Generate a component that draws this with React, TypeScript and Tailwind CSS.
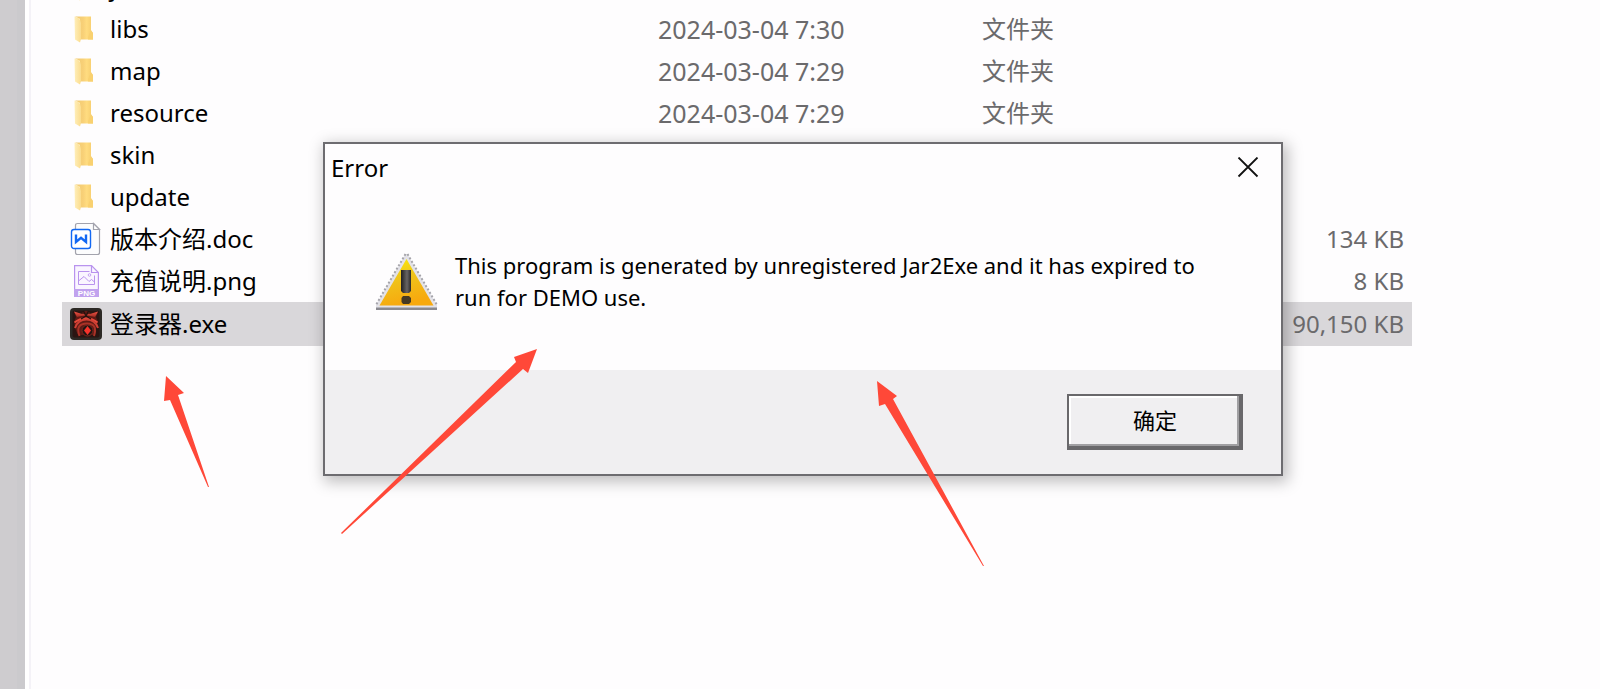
import type { ReactNode } from "react";

function FolderIcon() {
  return (
    <svg width="32" height="32" viewBox="0 0 32 32" aria-hidden="true">
      <defs>
        <linearGradient id="folderBack" x1="0" x2="1" y1="0" y2="0">
          <stop offset="0" stopColor="#f0ca72" />
          <stop offset="0.450" stopColor="#f8d077" />
          <stop offset="0.650" stopColor="#ffdc80" />
          <stop offset="1" stopColor="#f5cb6c" />
        </linearGradient>
        <linearGradient id="folderFront" x1="0" x2="1" y1="0" y2="0">
          <stop offset="0" stopColor="#ffeeb9" />
          <stop offset="1" stopColor="#fbdc8d" />
        </linearGradient>
      </defs>
      <path d="M5 3.500H21V17L23 20V26.500H10V6Z" fill="url(#folderBack)" />
      <path d="M20.500 18L23 20V26.500H18V24Z" fill="#f9d170" />
      <path d="M4.500 3.500L8.500 5Q11 7 11 10V26L10 29.500L5 26.500Z" fill="url(#folderFront)" />
    </svg>
  );
}

function DocIcon() {
  return (
    <svg width="32" height="34" viewBox="0 0 32 34" fill="none" aria-hidden="true">
      <path d="M7.500 1.500H23.500L29.500 7.500V30.500Q29.500 32.500 27.500 32.500H7.500Q5.500 32.500 5.500 30.500V3.500Q5.500 1.500 7.500 1.500Z" fill="#fcfcfd" stroke="#a3a3ad" strokeWidth="1.200" />
      <path d="M23.500 1.500V7.500H29.500Z" fill="#fff" stroke="#a3a3ad" strokeWidth="1.200" />
      <rect x="1.500" y="7.500" width="19" height="19" rx="2.500" fill="#fff" stroke="#1268f3" strokeWidth="1.400" />
      <path d="M6 12.500V20L11 15.800L16 20V12.500" stroke="#1268f3" strokeWidth="2.400" />
    </svg>
  );
}

function PngIcon() {
  return (
    <svg width="32" height="34" viewBox="0 0 32 34" fill="none" aria-hidden="true">
      <path d="M4.600 1.600H21.500L28.400 8.500V32H4.600Z" fill="#faf5ff" stroke="#b993ee" strokeWidth="1.200" />
      <path d="M21.500 1.600V8.500H28.400" stroke="#b993ee" strokeWidth="1.200" />
      <path d="M19.500 7.500H8.500V20.500H24.500V11.500" stroke="#b993ee" />
      <path d="M8.500 17L14 12.500L19 17.500L21.500 15.500L24.500 18" stroke="#b993ee" />
      <circle cx="19.500" cy="11" r="1.300" stroke="#b993ee" strokeWidth="0.800" />
      <rect x="4" y="25" width="25" height="8" fill="#c1a2ee" />
      <text x="16.500" y="32" textAnchor="middle" fontFamily="Liberation Sans, sans-serif" fontSize="8" fontWeight="700" fill="#fff">PNG</text>
    </svg>
  );
}

function ExeIcon() {
  return (
    <svg width="32" height="32" viewBox="0 0 32 32" fill="none" aria-hidden="true">
      <defs>
        <linearGradient id="crest" x1="0" x2="0" y1="0" y2="1">
          <stop offset="0" stopColor="#f45547" />
          <stop offset="1" stopColor="#9c2a20" />
        </linearGradient>
      </defs>
      <rect width="32" height="32" rx="4" fill="#2c2925" />
      <rect x="2.500" y="2.500" width="27" height="27" rx="2" fill="#2a1512" />
      <path d="M4 4L11 6L14 3H18L21 6L28 4L26 9L28 14L26 20L24 27H8L5 20L4 14L6 9Z" fill="#5f1a15" />
      <path d="M4 3.500L12 6H20L28 3.500L25 9Q16 6 7 9Z" fill="url(#crest)" />
      <path d="M4.500 14.500Q16 6 27.500 14.500" stroke="#e64a3c" strokeWidth="2" />
      <path d="M5 20Q8 11.500 16.500 11.500Q25 11.500 28 20" stroke="#cf4034" strokeWidth="2" />
      <path d="M9.500 28Q5 15.500 17 15.500Q28 15.500 24 28" stroke="#aa3227" strokeWidth="2" />
      <path d="M13.500 3L16 8L18.500 3M11 11L16 8L21 11" stroke="#25120f" strokeWidth="1.400" />
      <circle cx="17.500" cy="22.500" r="5.500" fill="#211412" stroke="#7a281f" />
      <path d="M17.500 18L21 22.500L17.500 27L14 22.500Z" fill="#f5332b" />
    </svg>
  );
}

function WarningIcon() {
  return (
    <svg width="64" height="58" viewBox="0 0 64 58" aria-hidden="true">
      <defs>
        <linearGradient id="warnFill" x1="0" x2="0.300" y1="0" y2="1">
          <stop offset="0" stopColor="#fff000" />
          <stop offset="0.450" stopColor="#efc51c" />
          <stop offset="1" stopColor="#f7a90e" />
        </linearGradient>
        <linearGradient id="warnMark" x1="0" x2="1" y1="0" y2="0">
          <stop offset="0" stopColor="#22201f" />
          <stop offset="0.600" stopColor="#686565" />
          <stop offset="1" stopColor="#2b2929" />
        </linearGradient>
      </defs>
      <path d="M30.500 1H32.500L62 52V56H1V52Z" fill="#e3e2e8" />
      <path d="M30.500 1L1 52M32.500 1L62 52" stroke="#a5a4aa" strokeWidth="2" strokeDasharray="2 2" />
      <path d="M1 54.500H62V57H1Z" fill="#8a898f" />
      <path d="M31.500 6L58.500 52.500H4.500Z" fill="url(#warnFill)" />
      <path d="M26 17H36V38L34 40H28L26 38Z" fill="url(#warnMark)" />
      <path d="M28 43H34L36 45V49L34 51H28L26.500 49V45Z" fill="#463a24" />
    </svg>
  );
}

type Entry = { name: string; icon: ReactNode; date?: string; type?: string; size?: string; selected?: boolean };

const entries: Entry[] = [
  { name: "jre", icon: <FolderIcon /> },
  { name: "libs", icon: <FolderIcon />, date: "2024-03-04 7:30", type: "文件夹" },
  { name: "map", icon: <FolderIcon />, date: "2024-03-04 7:29", type: "文件夹" },
  { name: "resource", icon: <FolderIcon />, date: "2024-03-04 7:29", type: "文件夹" },
  { name: "skin", icon: <FolderIcon /> },
  { name: "update", icon: <FolderIcon /> },
  { name: "版本介绍.doc", icon: <DocIcon />, size: "134 KB" },
  { name: "充值说明.png", icon: <PngIcon />, size: "8 KB" },
  { name: "登录器.exe", icon: <ExeIcon />, size: "90,150 KB", selected: true },
];

function FileList() {
  return (
    <table className="-mt-[34px] ml-[31px] w-[1350px] table-fixed border-collapse self-start text-2xl text-[#6b6a6c]">
      <colgroup>
        <col className="w-[596px]" />
        <col className="w-[324px]" />
        <col className="w-[200px]" />
        <col />
      </colgroup>
      <tbody>
        {entries.map((e) => (
          <tr key={e.name} className={e.selected ? "h-11 bg-[#d9d7da]" : "h-[42px]"}>
            <td className="p-0 pl-2">
              <div className="flex items-center gap-2 leading-8 text-black">
                {e.icon}
                <span>{e.name}</span>
              </div>
            </td>
            <td className="p-0 text-[25px] leading-8">{e.date}</td>
            <td className="p-0 leading-8">{e.type}</td>
            <td className="p-0 pr-2 text-right leading-8">{e.size}</td>
          </tr>
        ))}
      </tbody>
    </table>
  );
}

function ErrorDialog() {
  return (
    <section
      role="alertdialog"
      aria-labelledby="dialog-title"
      aria-describedby="dialog-message"
      className="absolute top-[142px] left-[323px] w-[960px] border-2 border-[#6d6c70] bg-[#fefdfe] text-black shadow-[3px_4px_14px_2px_rgba(0,0,0,0.25)]"
    >
      <header className="flex h-12 items-center justify-between pr-[21px] pl-1.5">
        <h1 id="dialog-title" className="text-2xl leading-8">Error</h1>
        <button type="button" aria-label="Close" className="flex size-6 items-center justify-center">
          <svg width="22" height="22" viewBox="0 0 22 22" fill="none" stroke="#111" strokeWidth="1.800" aria-hidden="true">
            <path d="M1.500 0.500L20.500 19.500M20.500 0.500L1.500 19.500" />
          </svg>
        </button>
      </header>
      <div className="flex h-[178px] items-start gap-4 pt-[57px] pl-[50px]">
        <div className="pt-1">
          <WarningIcon />
        </div>
        <p id="dialog-message" className="w-[780px] text-[22px] leading-8">
          This program is generated by unregistered Jar2Exe and it has expired to
          <br />
          run for DEMO use.
        </p>
      </div>
      <footer className="flex h-[104px] items-center justify-end bg-[#f0eff1] pr-[38px]">
        <button
          type="button"
          className="h-14 w-44 border-t-2 border-r-4 border-b-4 border-l-2 border-[#69686b] bg-[#f0eff1] pb-0.5 pl-0.5 text-[22px] leading-8 shadow-[inset_-2px_-2px_0_#a09fa2,inset_2px_2px_0_#ffffff]"
        >
          确定
        </button>
      </footer>
    </section>
  );
}

function Arrows() {
  return (
    <svg className="pointer-events-none absolute top-0 left-0" width="1600" height="689" viewBox="0 0 1600 689" fill="#ff4838" aria-hidden="true">
      <path d="M166 376L184 393L178 395L209 487L208 487L170 400L164 401Z" />
      <path d="M537 349L528 373L523 369L342 534L341 533L516 362L514 357Z" />
      <path d="M877 381L897 396L893 399L984 566L983 566L885 404L879 406Z" />
    </svg>
  );
}

export default function App() {
  return (
    <main className="relative flex h-screen overflow-hidden bg-[#fefdfe] font-['Noto_Sans','Noto_Sans_CJK_SC',sans-serif]">
      <div className="w-[25px] shrink-0 border-r-8 border-[#cbcacd] bg-[#cecccf]" />
      <div className="w-1.5 shrink-0 border-r-2 border-[#f4f2f7] bg-white" />
      <FileList />
      <ErrorDialog />
      <Arrows />
    </main>
  );
}
